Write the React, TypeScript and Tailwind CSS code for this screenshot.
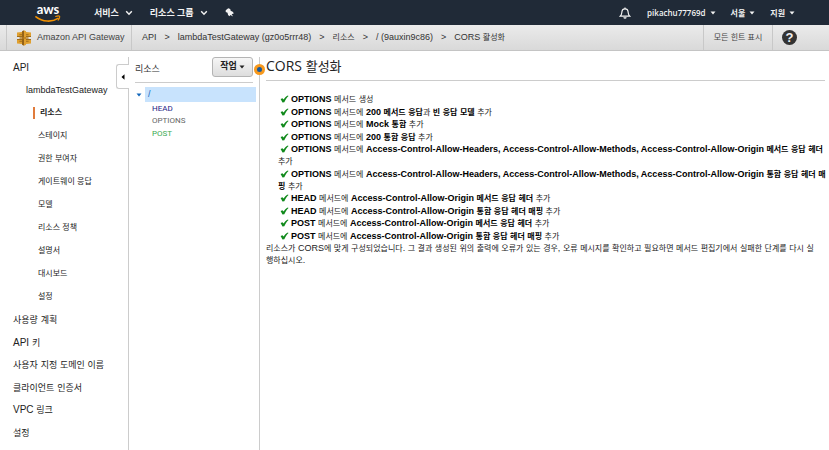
import React from "react";

const SANS = "font-['Liberation_Sans','Noto_Sans_CJK_KR',sans-serif]";
const HUMANIST = "font-['Open_Sans','Noto_Sans_CJK_KR',sans-serif]";

/* Hangul is set one size below the Latin text around it; "\n" is a line break. */
function Mixed({ text, ko = "text-[8px]" }: { text: string; ko?: string }) {
  return (
    <>
      {text.split(/([가-힣]+|\n)/).map((part, i) => {
        if (part === "\n") return <br key={i} />;
        return i % 2 === 1 ? (
          <span key={i} className={`${ko} leading-none`}>
            {part}
          </span>
        ) : (
          part
        );
      })}
    </>
  );
}

function Chevron() {
  return (
    <svg viewBox="0 0 8 6" className="h-[6px] w-[8px]" fill="none" stroke="currentColor" strokeWidth="1.4">
      <path d="M1.2 1.2 4 4.2 6.8 1.2" />
    </svg>
  );
}

function Caret() {
  return (
    <svg viewBox="0 0 6 4" className="h-[4px] w-[6px]" fill="currentColor">
      <path d="M0.5 0.5h5L3 3.6z" />
    </svg>
  );
}

function AwsLogo() {
  return (
    <a href="#" aria-label="AWS" className="flex w-[26px] flex-col items-center text-white">
      <span className="font-['Lato',sans-serif] text-[13px] font-bold leading-[12px]">aws</span>
      <svg viewBox="0 0 26 8" className="h-[8px] w-[26px]" fill="none" stroke="#f29100" strokeLinecap="round">
        <path d="M1 1.8C7.500 7 17 7.300 23 3.400" strokeWidth="1.7" />
        <path d="M20.600 1.400C22.500 .8 24.300 .9 24.600 1.400S24.400 4 23.200 5.200" strokeWidth="1.1" />
      </svg>
    </a>
  );
}

function GatewayIcon() {
  return (
    <svg viewBox="0 0 14 16" className="h-[16px] w-[14px]">
      <g fill="#e0a030">
        <path d="M0 2.500 5 2v5H0z" />
        <path d="M14 2.500 9 2v5h5z" />
        <path d="M0 13.500 5 14V9H0z" />
        <path d="M14 13.500 9 14V9h5z" />
      </g>
      <g fill="#a06c18">
        <path d="M0 5.900h5V7H0zM9 5.900h5V7H9zM0 9h5v1H0zM9 9h5v1H9z" />
        <path d="M2.400 4.300H5v1H2.400zM9 4.300h2.600v1H9zM2.400 10.800H5v1H2.400zM9 10.800h2.600v1H9z" />
      </g>
      <path d="M5 1.200 7 .2V15.800L5 14.800z" fill="#946217" />
      <path d="M9 1.200 7 .2V15.800L9 14.800z" fill="#e0a030" />
      <path d="M2.500 7.300h9v1.400h-9z" fill="#b57c1f" />
    </svg>
  );
}

function TopBar() {
  return (
    <header className={`flex h-[25px] items-center bg-[#202a37] pl-[35px] pr-[34px] text-[#f2f2f2] ${HUMANIST}`}>
      <AwsLogo />
      <nav className="ml-[33px] flex items-center text-[9px] font-bold">
        <button className="flex items-center gap-[6px]">
          서비스 <Chevron />
        </button>
        <button className="ml-[17px] flex items-center gap-[6px]">
          리소스 그룹 <Chevron />
        </button>
        <button aria-label="고정" className="ml-[17px]">
          <svg viewBox="0 0 10 10" className="h-[9px] w-[9px]" fill="currentColor">
            <path d="M3.600.4 5.800 1.200 6.300 3 9 4.400 9.600 6.300 7.400 6.800 8.900 9.400 6 7.700 4.900 9.200 3.400 7.900 2.800 5.400.8 4.500.8 2.500z" />
          </svg>
        </button>
      </nav>
      <div className="ml-auto flex items-center text-[8px] font-semibold">
        <button aria-label="알림" className="mr-[16px]">
          <svg viewBox="0 0 12 12" className="h-[12px] w-[12px]" fill="none" stroke="currentColor" strokeWidth="1.2">
            <path d="M1.200 9.200C2.800 7.800 2.700 6.500 2.900 4.800 3.100 3 4.300 1.900 6 1.900S8.900 3 9.100 4.800C9.300 6.500 9.200 7.800 10.800 9.200z" />
            <path d="M6 .5v1.400M4.800 10.300c.4 1.100 2 1.100 2.400 0" />
          </svg>
        </button>
        <button className="flex items-center gap-[4px]">
          pikachu77769d <Caret />
        </button>
        <button className="ml-[15px] flex items-center gap-[4px]">
          서울 <Caret />
        </button>
        <button className="ml-[15px] flex items-center gap-[4px]">
          지원 <Caret />
        </button>
      </div>
    </header>
  );
}

const crumbs = ["API", "lambdaTestGateway (gz0o5rrr48)", "리소스", "/ (9auxin9c86)", "CORS 활성화"];

function CrumbBar() {
  return (
    <div className="flex h-[26px] items-stretch border-b border-[#c4c4c4] bg-linear-to-b from-[#ebebeb] to-[#d9d9d9] pl-[6px] text-[9px] text-[#444]">
      <a href="#" className="flex w-[126px] items-center gap-[6px] whitespace-nowrap border-x border-x-[#c8c8c8] pl-[10px]">
        <GatewayIcon />
        Amazon API Gateway
      </a>
      <nav aria-label="경로" className="flex flex-1 items-center gap-[8px] whitespace-nowrap pl-[10px] text-[#333]">
        {crumbs.map((c, i) => (
          <React.Fragment key={c}>
            {i > 0 && <span>&gt;</span>}
            <a href="#">
              <Mixed text={c} />
            </a>
          </React.Fragment>
        ))}
      </nav>
      <button className="w-[70px] border-x border-x-[#c8c8c8] text-[8px] text-[#444]">모든 힌트 표시</button>
      <button aria-label="도움말" className="flex w-[56px] items-center pl-[9px]">
        <span className="flex size-[15px] items-center justify-center rounded-full bg-[#333] text-[13px] font-bold leading-none text-[#eee]">
          ?
        </span>
      </button>
    </div>
  );
}

const apiPages = ["스테이지", "권한 부여자", "게이트웨이 응답", "모델", "리소스 정책", "설명서", "대시보드", "설정"];
const mainPages = ["사용량 계획", "API 키", "사용자 지정 도메인 이름", "클라이언트 인증서", "VPC 링크", "설정"];

function Sidebar() {
  return (
    <aside className="relative w-[129px] shrink-0 border-r border-[#ccc] text-[#222]">
      <a href="#" className="block pl-[13px] text-[10px] leading-[22px]">API</a>
      <a href="#" className="block pl-[26px] text-[9px] leading-[22px]">lambdaTestGateway</a>
      <ul className="text-[8px] leading-[23px]">
        <li className="flex h-[23px] items-center pl-[33px] font-bold">
          <a href="#" className="border-l-2 border-[#e07b3c] pl-[5px] leading-[12px]">리소스</a>
        </li>
        {apiPages.map((p) => (
          <li key={p} className="pl-[38px]">
            <a href="#">{p}</a>
          </li>
        ))}
      </ul>
      <ul className="pt-[1px] text-[10px] leading-[22px]">
        {mainPages.map((p) => (
          <li key={p} className="pl-[13px] even:pt-[1px]">
            <a href="#">
              <Mixed text={p} ko="text-[9px]" />
            </a>
          </li>
        ))}
      </ul>
      <button
        aria-label="탐색 닫기"
        className="absolute -right-px top-[7px] flex h-[25px] w-[13px] items-center justify-center rounded-l-[3px] border border-r-0 border-[#ccc] bg-white text-black"
      >
        <svg viewBox="0 0 4 6" className="h-[6px] w-[4px]" fill="currentColor">
          <path d="M3.500.3v5.400L.5 3z" />
        </svg>
      </button>
    </aside>
  );
}

const methods = [
  { name: "HEAD", color: "text-[#1b1b85]" },
  { name: "OPTIONS", color: "text-[#666]" },
  { name: "POST", color: "text-[#3cab54]" },
];

function ResourceTree() {
  return (
    <section className="relative w-[131px] shrink-0 border-r border-[#ccc]">
      <div className="ml-[6px] mr-[6px] flex h-[26px] items-center justify-between border-b border-[#ccc]">
        <h2 className="text-[9px] text-[#333]">리소스</h2>
        <button className="-mt-[6px] flex h-[20px] w-[41px] items-center justify-center gap-[2px] rounded-[3px] border border-[#b4b4b4] bg-linear-to-b from-[#f6f6f6] to-[#ddd] text-[9px] font-bold text-[#222]">
          작업 <Caret />
        </button>
      </div>
      <div className="mt-[4px] flex items-center pl-[6px] pr-[3px]">
        <button aria-label="접기" className="w-[10px] pl-[1px] text-[#1166bb]">
          <Caret />
        </button>
        <a href="#" className="flex-1 bg-[#c8e3fd] pl-[3px] text-[9px] leading-[15px] text-[#1166bb]">/</a>
      </div>
      <ul className="pl-[23px] font-['Roboto',sans-serif] text-[8px]">
        {methods.map((m) => (
          <li key={m.name} className="leading-[12px] odd:pt-[1px]">
            <a href="#" className={m.color}>{m.name}</a>
          </li>
        ))}
      </ul>
      <span className="absolute -right-[6px] top-[7px] flex size-[11px] items-center justify-center rounded-full bg-[#f7991d]">
        <span className="size-[5px] rounded-full bg-[#1a5a9e]" />
      </span>
    </section>
  );
}

function Check() {
  return (
    <svg viewBox="0 0 9 8" className="mr-[2px] inline h-[8px] w-[9px] align-[-1px]" fill="#118a1c">
      <path d="M.6 4.100 2.500 3.200 3.500 4.500C4.600 2.900 5.900 1.400 7.900.4L8.500 1C6.800 2.700 5.500 4.800 4.300 7.200L2.500 7.500z" />
    </svg>
  );
}

/* Text between asterisks is set in bold. */
const steps = [
  "*OPTIONS* 메서드 생성",
  "*OPTIONS* 메서드에 *200 메서드 응답*과 *빈 응답 모델* 추가",
  "*OPTIONS* 메서드에 *Mock 통합* 추가",
  "*OPTIONS* 메서드에 *200 통합 응답* 추가",
  "*OPTIONS* 메서드에 *Access-Control-Allow-Headers, Access-Control-Allow-Methods, Access-Control-Allow-Origin 메서드 응답 헤더* 추가",
  "*OPTIONS* 메서드에 *Access-Control-Allow-Headers, Access-Control-Allow-Methods, Access-Control-Allow-Origin 통합 응답 헤더 매\n핑* 추가",
  "*HEAD* 메서드에 *Access-Control-Allow-Origin 메서드 응답 헤더* 추가",
  "*HEAD* 메서드에 *Access-Control-Allow-Origin 통합 응답 헤더 매핑* 추가",
  "*POST* 메서드에 *Access-Control-Allow-Origin 메서드 응답 헤더* 추가",
  "*POST* 메서드에 *Access-Control-Allow-Origin 통합 응답 헤더 매핑* 추가",
];

function CorsPanel() {
  return (
    <main className="min-w-0 flex-1 pl-[6px] text-[9px] leading-[12px] text-[#222]">
      <h1 className={`mr-[4px] h-[24px] border-b border-[#ccc] text-[14px] leading-[18px] ${HUMANIST}`}>
        <Mixed text="CORS 활성화" ko="text-[13px]" />
      </h1>
      <ul className="pl-[12px] pt-[12px]">
        {steps.map((s) => (
          <li key={s} className="odd:pb-[1px]">
            <span className="pl-[2px]">
              <Check />
            </span>
            {s.split("*").map((part, i) =>
              i % 2 === 1 ? (
                <b key={i} className="font-bold text-black">
                  <Mixed text={part} />
                </b>
              ) : (
                <Mixed key={i} text={part} />
              )
            )}
          </li>
        ))}
      </ul>
      <p>
        <Mixed
          text={
            "리소스가 CORS에 맞게 구성되었습니다. 그 결과 생성된 위의 출력에 오류가 있는 경우, 오류 메시지를 확인하고 필요하면 메서드 편집기에서 실패한 단계를 다시 실\n행하십시오."
          }
        />
      </p>
    </main>
  );
}

export default function App() {
  return (
    <div className={`flex min-h-screen flex-col bg-white ${SANS}`}>
      <TopBar />
      <CrumbBar />
      <div className="flex flex-1 pt-[6px]">
        <Sidebar />
        <ResourceTree />
        <CorsPanel />
      </div>
    </div>
  );
}
